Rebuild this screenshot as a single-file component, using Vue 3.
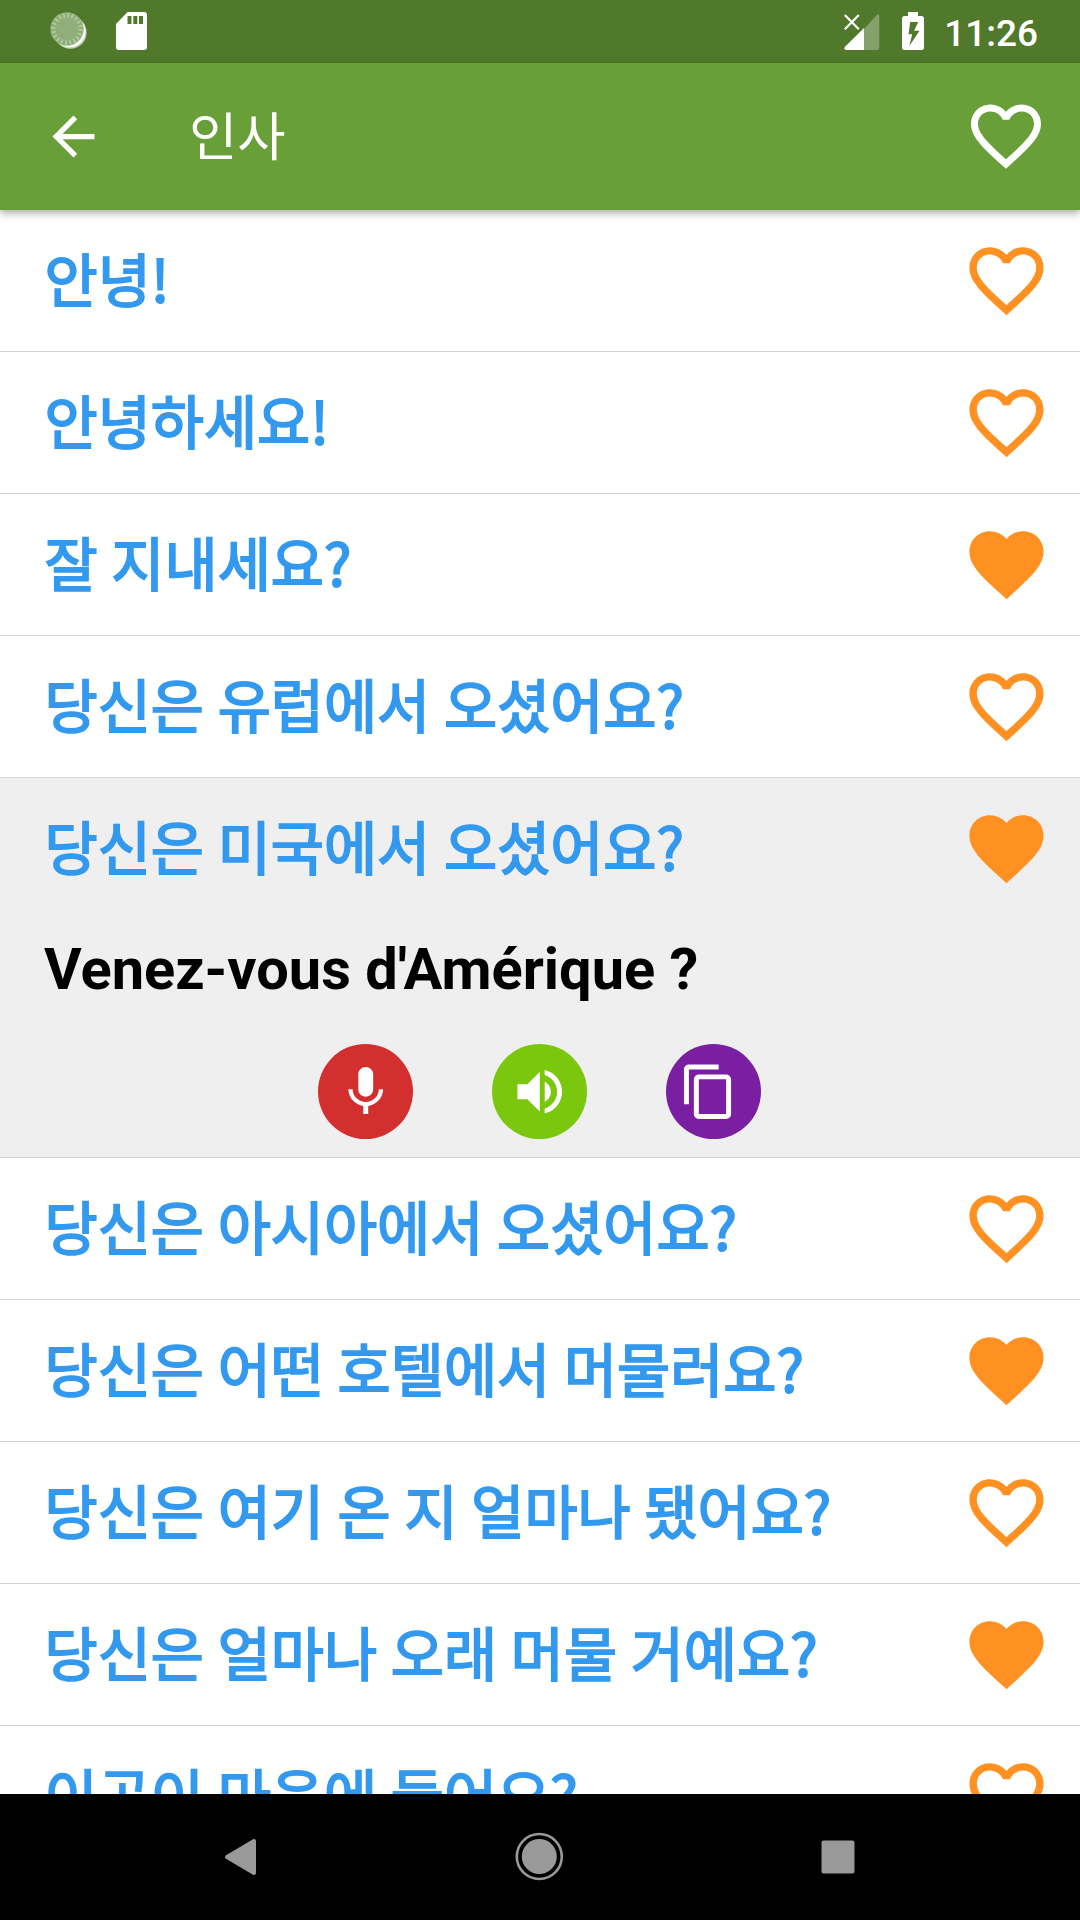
<script setup>
const phrases = [
  { text: '안녕!', fav: false },
  { text: '안녕하세요!', fav: false },
  { text: '잘 지내세요?', fav: true },
  { text: '당신은 유럽에서 오셨어요?', fav: false },
  { text: '당신은 미국에서 오셨어요?', fav: true, translation: "Venez-vous d'Amérique ?" },
  { text: '당신은 아시아에서 오셨어요?', fav: false },
  { text: '당신은 어떤 호텔에서 머물러요?', fav: true },
  { text: '당신은 여기 온 지 얼마나 됐어요?', fav: false },
  { text: '당신은 얼마나 오래 머물 거예요?', fav: true },
  { text: '이곳이 마음에 들어요?', fav: false },
]
const outline =
  'M16.5 3c-1.74 0-3.41.81-4.5 2.09C10.91 3.81 9.24 3 7.5 3 4.42 3 2 5.42 2 8.5c0 3.78 3.4 6.86 8.55 11.54L12 21.35l1.45-1.32C18.6 15.36 22 12.28 22 8.5 22 5.42 19.58 3 16.5 3zm-4.4 15.55l-.1.1-.1-.1C7.14 14.24 4 11.39 4 8.5 4 6.5 5.5 5 7.5 5c1.54 0 3.04.99 3.57 2.36h1.87C13.46 5.99 14.96 5 16.5 5c2 0 3.5 1.5 3.5 3.5 0 2.89-3.14 5.74-7.9 10.05z'
const solid =
  'M12 21.35l-1.45-1.32C5.4 15.36 2 12.28 2 8.5 2 5.42 4.42 3 7.5 3c1.74 0 3.41.81 4.5 2.09C13.09 3.81 14.76 3 16.5 3 19.58 3 22 5.42 22 8.5c0 3.78-3.4 6.86-8.55 11.54L12 21.35z'
</script>

<template>
  <div class="screen">
    <div class="status">
      <svg class="sync" viewBox="0 0 38 38">
        <circle cx="20.3" cy="20.5" r="16.3" fill="#c3d3b5" />
        <circle cx="19.5" cy="19.3" r="16" fill="#fff" />
        <circle cx="17" cy="17" r="16.7" fill="#8fae79" />
        <circle cx="17" cy="17" r="13.6" fill="none" stroke="#b4c8a3" stroke-width="4.6" stroke-dasharray="1.7 2.57" />
      </svg>
      <svg class="sd" viewBox="0 0 31 38">
        <path fill="#fff" fill-rule="evenodd" d="M11.6 0H28q3 0 3 3v32q0 3-3 3H3q-3 0-3-3V12zM11.5 4v8h4V4zM17.3 4v8h4V4zM23 4v8h4V4z" />
      </svg>
      <span class="spacer"></span>
      <svg class="signal" viewBox="0 0 36 38">
        <path fill="#fff" fill-opacity=".3" d="M20 17L32.500 3.200Q35.300 1 35.300 4v31q0 3-3 3H20z" />
        <path fill="#fff" d="M20 16v22H2.500Q-1 37.500 1 34.800z" />
        <path stroke="#fff" stroke-width="2.200" d="M.8 3l14 14.200M14.800 3L.8 17.200" />
      </svg>
      <svg class="battery" viewBox="0 0 22 38">
        <path fill="#fff" fill-rule="evenodd" d="M6 0h10v4h3.500Q22 4 22 6.500v29q0 2.500-2.500 2.500h-17Q0 38 0 35.500v-29Q0 4 2.500 4H6zM8.200 10L6.500 22.200h3.700L7.300 34 17.500 18.800H12L16.300 10z" />
      </svg>
      <span class="time">11:26</span>
    </div>

    <header class="appbar">
      <svg class="back" viewBox="0 0 24 24"><path fill="#fff" d="M20 11H7.830l5.590-5.590L12 4l-8 8 8 8 1.410-1.410L7.830 13H20v-2z" /></svg>
      <h1 class="title">인사</h1>
      <span class="spacer"></span>
      <svg class="head-heart" viewBox="0 0 24 24"><path fill="#fff" :d="outline" /></svg>
    </header>

    <main class="list">
      <section v-for="p in phrases" :key="p.text" class="item" :class="{ open: p.translation }">
        <div class="row">
          <span class="phrase">{{ p.text }}</span>
          <svg class="heart" viewBox="0 0 24 24"><path fill="#ff9122" :d="p.fav ? solid : outline" /></svg>
        </div>
        <template v-if="p.translation">
          <p class="translation">{{ p.translation }}</p>
          <div class="actions">
            <span class="btn mic">
              <svg viewBox="0 0 24 24"><path fill="#fff" d="M12 14c1.660 0 2.990-1.340 2.990-3L15 5c0-1.660-1.340-3-3-3S9 3.340 9 5v6c0 1.660 1.340 3 3 3zm5.300-3c0 3-2.540 5.100-5.300 5.100S6.700 14 6.700 11H5c0 3.410 2.720 6.230 6 6.720V21h2v-3.280c3.280-.48 6-3.300 6-6.720h-1.700z" /></svg>
            </span>
            <span class="btn sound">
              <svg viewBox="0 0 24 24"><path fill="#fff" d="M3 9v6h4l5 5V4L7 9H3zm13.500 3c0-1.770-1.020-3.290-2.500-4.030v8.050c1.480-.73 2.500-2.250 2.500-4.020zM14 3.230v2.060c2.890.86 5 3.540 5 6.710s-2.110 5.850-5 6.710v2.060c4.010-.91 7-4.490 7-8.770s-2.990-7.860-7-8.770z" /></svg>
            </span>
            <span class="btn copy">
              <svg viewBox="0 0 24 24"><path fill="#fff" d="M16 1H4c-1.100 0-2 .9-2 2v14h2V3h12V1zm3 4H8c-1.100 0-2 .9-2 2v14c0 1.100.9 2 2 2h11c1.100 0 2-.9 2-2V7c0-1.100-.9-2-2-2zm0 16H8V7h11v14z" /></svg>
            </span>
          </div>
        </template>
      </section>
    </main>

    <nav class="navbar">
      <svg viewBox="0 0 48 48"><path fill="#999" stroke="#999" stroke-width="4" stroke-linejoin="round" d="M37 8v32L10 24z" /></svg>
      <svg viewBox="0 0 48 48"><circle cx="23.300" cy="23.500" r="22.500" fill="none" stroke="#999" stroke-width="2.600" /><circle cx="23.300" cy="23.500" r="17.500" fill="#999" /></svg>
      <svg viewBox="0 0 48 48"><rect x="7.500" y="7.500" width="33" height="33" rx="2" fill="#999" /></svg>
    </nav>
  </div>
</template>

<style>
body { margin: 0; background: #fff; }
</style>

<style scoped>
.screen {
  width: 1080px;
  height: 1920px;
  display: flex;
  flex-direction: column;
  overflow: hidden;
  background: #fff;
  font-family: Roboto, "Noto Sans CJK KR", sans-serif;
}
.spacer { flex: 1; }
svg { display: block; flex: none; overflow: visible; }

.status {
  height: 63px;
  flex: none;
  display: flex;
  align-items: flex-start;
  box-sizing: border-box;
  padding: 12px 42px 0 50px;
  background: #50792c;
}
.sync { width: 38px; height: 38px; margin-right: 28px; }
.sd { width: 31px; height: 38px; }
.signal { width: 36px; height: 38px; margin-right: 22px; }
.battery { width: 22px; height: 38px; margin-right: 20px; }
.time { margin-top: 1px; font-size: 37px; line-height: 42px; font-weight: 500; color: #fff; }

.appbar {
  position: relative;
  z-index: 1;
  height: 147px;
  flex: none;
  display: flex;
  align-items: center;
  box-sizing: border-box;
  padding: 0 32px 0 42px;
  background: #689f38;
  box-shadow: 0 3px 8px rgba(0, 0, 0, 0.35);
}
.back { width: 63px; height: 63px; }
.title {
  margin: 0 0 7px 84px;
  font-family: "Noto Sans CJK KR", sans-serif;
  font-size: 52.5px;
  line-height: 78px;
  font-weight: 400;
  color: #fff;
}
.head-heart { width: 84px; height: 84px; margin-top: -2px; }

.list { flex: 1; min-height: 0; overflow: hidden; }
.item { box-sizing: border-box; height: 142px; border-bottom: 1px solid #d3d3d3; }
.item.open { height: 380px; background: #efefef; }
.row {
  height: 141px;
  display: flex;
  align-items: center;
  justify-content: space-between;
  padding: 0 29px 0 44.5px;
}
.phrase {
  margin-bottom: 7px;
  font-family: "Noto Sans CJK KR", sans-serif;
  font-size: 57.75px;
  line-height: 84px;
  word-spacing: 0.8px;
  white-space: nowrap;
  color: #3399ee;
  -webkit-text-stroke: 1.9px #3399ee;
}
.heart { width: 89px; height: 89px; }
.translation {
  margin: 12px 0 0;
  padding-left: 44px;
  font-size: 57.75px;
  line-height: 76px;
  font-weight: 700;
  color: #000;
  white-space: nowrap;
}
.actions { display: flex; justify-content: center; gap: 79px; margin: 37px 2px 0 0; }
.btn {
  width: 95px;
  height: 95px;
  display: flex;
  align-items: center;
  justify-content: center;
  border-radius: 50%;
}
.btn svg { width: 59.5px; height: 59.5px; margin-left: 1px; }
.mic { background: #d32f2f; }
.sound { background: #7bc70d; }
.copy { background: #7b1fa2; }
.copy svg { margin-right: 9px; }

.navbar {
  height: 126px;
  flex: none;
  display: flex;
  align-items: center;
  justify-content: space-between;
  box-sizing: border-box;
  padding: 0 218px 0 217px;
  background: #000;
}
.navbar svg { width: 48px; height: 48px; }
</style>
